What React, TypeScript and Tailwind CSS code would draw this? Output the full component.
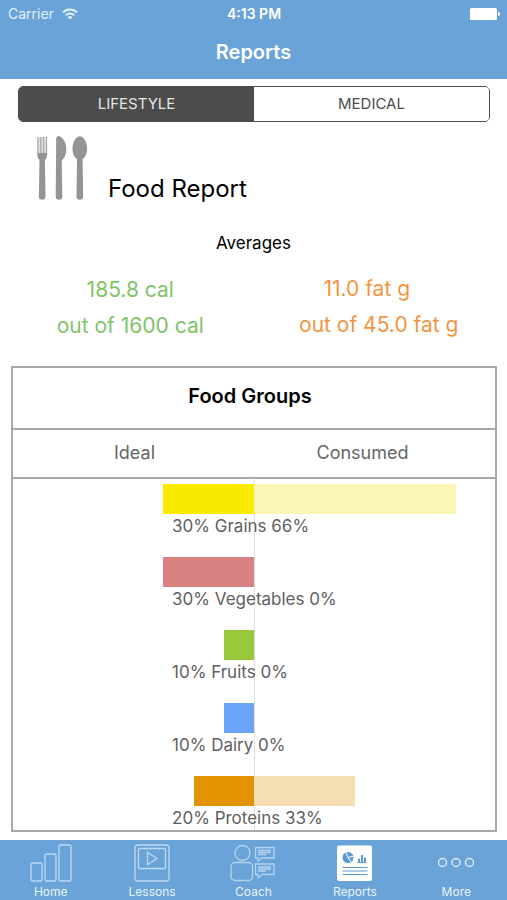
import { useState, type ReactNode } from "react";

type Group = {
  name: string;
  ideal: number;
  consumed: number;
  idealColor: string;
  consumedColor: string;
};

const groups: Group[] = [
  { name: "Grains", ideal: 30, consumed: 66.7, idealColor: "bg-[#faea00]", consumedColor: "bg-[#fcf7b4]" },
  { name: "Vegetables", ideal: 30, consumed: 0, idealColor: "bg-[#d88381]", consumedColor: "bg-[#f1d2d1]" },
  { name: "Fruits", ideal: 10, consumed: 0, idealColor: "bg-[#98c93a]", consumedColor: "bg-[#deeebf]" },
  { name: "Dairy", ideal: 10, consumed: 0, idealColor: "bg-[#6ba5fa]", consumedColor: "bg-[#d0e2fd]" },
  { name: "Proteins", ideal: 20, consumed: 33.3, idealColor: "bg-[#e29400]", consumedColor: "bg-[#f6deb3]" },
];

// Share of a half-chart that one percentage point fills.
const SCALE = 1.255;

function Wifi() {
  return (
    <svg viewBox="0 0 16 12" className="h-3 w-4" fill="none" stroke="currentColor" strokeWidth="2" aria-hidden="true">
      <path d="M1 4.4a10 10 0 0 1 14 0" />
      <path d="M3.8 7.3a6 6 0 0 1 8.4 0" />
      <path d="M8 11.6 5.6 9.2a3.4 3.4 0 0 1 4.8 0z" fill="currentColor" stroke="none" />
    </svg>
  );
}

function Battery() {
  return (
    <svg viewBox="0 0 30 12" className="h-3 w-[30px]" fill="currentColor" aria-hidden="true">
      <rect x="0" y="0" width="27" height="12" rx="1.5" />
      <path d="M28 4a2 2 0 0 1 0 4z" />
    </svg>
  );
}

function Cutlery() {
  return (
    <svg viewBox="0 0 52 64" className="h-16 w-[52px] shrink-0" fill="#929594" aria-hidden="true">
      <path d="M1.500 1h9.500v17H1.500z" fill="#dcdddd" />
      <path d="M1.900 1v17M4.800 1v17M7.700 1v17M10.600 1v17" stroke="#9fa2a1" strokeWidth="1" fill="none" />
      <path d="M1.400 17h9.700c.2 3-.2 5.500-2.200 7l.6 36.500a3.300 3.300 0 0 1-6.600 0L3.500 24c-2-1.500-2.300-4-2.100-7z" />
      <path d="M20.200 2.500Q20.300 0 22.500 0c4.700 1 7.800 7 7.800 13 0 5.500-1.800 9-4.600 11.500l.6 36a3.300 3.300 0 0 1-6.600 0z" />
      <path d="M43.800.2c4.300 0 7.300 6.800 7.300 12.500 0 5-1.900 8.700-4.500 10.300l.5 37.500a3.300 3.300 0 0 1-6.600 0L41 23c-2.600-1.600-4.500-5.300-4.500-10.300C36.500 7 39.500.2 43.800.2z" />
    </svg>
  );
}

function HomeIcon() {
  return (
    <svg viewBox="0 0 42 38" className="h-[38px] w-[42px]" fill="none" stroke="#bddaf2" strokeWidth="1.300" aria-hidden="true">
      <rect x="1" y="19" width="11" height="18" rx="1.500" />
      <rect x="15" y="10" width="11" height="27" rx="1.500" />
      <rect x="29" y="1" width="12" height="36" rx="1.500" />
    </svg>
  );
}

function LessonsIcon() {
  return (
    <svg viewBox="0 0 36 38" className="h-[38px] w-9" fill="none" stroke="#bddaf2" strokeWidth="1.300" aria-hidden="true">
      <rect x="1" y="1" width="34" height="36" rx="2.500" />
      <rect x="4.500" y="4.500" width="27" height="20" rx="1" />
      <path d="M13.500 8.500v12l9.500-6z" />
    </svg>
  );
}

function CoachIcon() {
  return (
    <svg viewBox="0 0 46 38" className="h-[38px] w-[46px]" fill="none" stroke="#b2d3ef" strokeWidth="1.300" aria-hidden="true">
      <circle cx="12.500" cy="9" r="7.500" />
      <rect x="1" y="18.500" width="21.500" height="18" rx="4" />
      <path d="M25.500 3.500h18.500v10.500H32l-4 3v-3h-2.500z" />
      <path d="M25.500 20h18.500v10.500H32l-4 3.500v-3.500h-2.500z" />
      <path d="M28 6.500h13M28 8.500h13M28 10.500h8M28 23h13M28 25h13M28 27h8" />
    </svg>
  );
}

function ReportsIcon() {
  return (
    <svg viewBox="0 0 36 38" className="h-[38px] w-9" aria-hidden="true">
      <rect x="0" y="1.500" width="35" height="35.500" rx="2" fill="#fff" />
      <circle cx="11" cy="13.500" r="5.500" fill="#5d9bd3" />
      <path d="M11 13.500 8.500 7.500M11 13.500l6-1.500M11 13.500l3.500 5" stroke="#fff" strokeWidth="1" />
      <path d="M22 18v-3.500M25 18v-7M28 18v-4.500" stroke="#5d9bd3" strokeWidth="2" />
      <path d="M20.500 18.500h9M5.500 23.500h25M5.500 27h25M5.500 30.500h25" stroke="#5d9bd3" strokeWidth="1.200" />
    </svg>
  );
}

function MoreIcon() {
  return (
    <svg viewBox="0 0 38 38" className="size-[38px]" fill="none" stroke="#d6e9f8" strokeWidth="1.500" aria-hidden="true">
      <circle cx="5.500" cy="18.500" r="4" />
      <circle cx="19" cy="18.500" r="4" />
      <circle cx="32.500" cy="18.500" r="4" />
    </svg>
  );
}

const tabs: { label: string; icon: ReactNode }[] = [
  { label: "Home", icon: <HomeIcon /> },
  { label: "Lessons", icon: <LessonsIcon /> },
  { label: "Coach", icon: <CoachIcon /> },
  { label: "Reports", icon: <ReportsIcon /> },
  { label: "More", icon: <MoreIcon /> },
];

function GroupRow({ group }: { group: Group }) {
  return (
    <li className="relative">
      <div className="grid grid-cols-2">
        <div className="flex justify-end">
          <div className={`h-[30px] ${group.idealColor}`} style={{ width: `${group.ideal * SCALE}%` }} />
        </div>
        <div className={`h-[30px] ${group.consumedColor}`} style={{ width: `${group.consumed * SCALE}%` }} />
      </div>
      <p className="pl-[33%] text-[17px] leading-6 text-[#5f5f5f]">
        {group.ideal}% {group.name} {Math.floor(group.consumed)}%
      </p>
    </li>
  );
}

export default function App() {
  const [section, setSection] = useState("LIFESTYLE");

  return (
    <div className="flex min-h-screen flex-col bg-white font-[Inter,'Liberation_Sans',sans-serif] text-black">
      <header className="h-[79px] bg-[#69a3d7] text-white">
        <div className="grid h-7 grid-cols-3 items-center pl-2 pr-[7px]">
          <div className="flex items-center gap-2 text-sm text-[#e4f0fa]">
            Carrier <Wifi />
          </div>
          <time className="text-center text-sm font-semibold">4:13 PM</time>
          <div className="flex justify-end">
            <Battery />
          </div>
        </div>
        <h1 className="pt-2 text-center text-xl font-semibold leading-8">Reports</h1>
      </header>

      <main>
        <div className="ml-[18px] mr-[17px] mt-[7px] grid h-9 grid-cols-2 overflow-hidden rounded-[5px] border border-[#4c4c4c]">
          {["LIFESTYLE", "MEDICAL"].map((name) => (
            <button
              key={name}
              type="button"
              aria-pressed={section === name}
              onClick={() => setSection(name)}
              className={`text-[15px] ${section === name ? "bg-[#4c4c4c] text-[#e6e6e6]" : "bg-white text-[#4c4c4c]"}`}
            >
              {name}
            </button>
          ))}
        </div>

        <div className="flex items-end gap-5 pl-9 pt-3.5">
          <Cutlery />
          <h2 className="text-2xl leading-[22px]">Food Report</h2>
        </div>

        <section>
          <h3 className="pt-[31px] text-center text-[17px] leading-6">Averages</h3>
          <div className="grid grid-cols-2 px-[11px] pt-4 text-center text-[21px] leading-9">
            <div className="pr-1 pt-px text-[#7fc36a]">
              <p>185.8 cal</p>
              <p>out of 1600 cal</p>
            </div>
            <div className="pl-2 text-[#f2953f]">
              <p className="pr-6">11.0 fat g</p>
              <p>out of 45.0 fat g</p>
            </div>
          </div>
        </section>

        <section className="mb-2 ml-[11px] mr-2.5 mt-[22px] border-2 border-[#a9a9a9]">
          <h3 className="border-b-2 border-[#a9a9a9] pb-[18px] pr-2 pt-3.5 text-center text-xl font-semibold leading-7">
            Food Groups
          </h3>
          <div className="grid grid-cols-2 border-b-2 border-[#a9a9a9] pb-3 pt-[11px] text-center text-lg leading-6 text-[#666]">
            <span className="pl-0.5">Ideal</span>
            <span className="pr-6">Consumed</span>
          </div>
          <div className="relative pt-[5px]">
            <div className="absolute inset-y-0 left-1/2 w-px bg-[#dedcde]" />
            <ul className="flex flex-col gap-[19px]">
              {groups.map((group) => (
                <GroupRow key={group.name} group={group} />
              ))}
            </ul>
          </div>
        </section>
      </main>

      <nav className="mt-auto h-[60px] bg-[#69a3d7]">
        <ul className="grid h-full grid-cols-5">
          {tabs.map((tab) => (
            <li key={tab.label}>
              <a
                href={`#${tab.label.toLowerCase()}`}
                aria-current={tab.label === "Reports" ? "page" : undefined}
                className="flex h-full flex-col items-center gap-0.5 pt-1 text-xs leading-4 text-[#eaf4fc]"
              >
                {tab.icon}
                {tab.label}
              </a>
            </li>
          ))}
        </ul>
      </nav>
    </div>
  );
}
